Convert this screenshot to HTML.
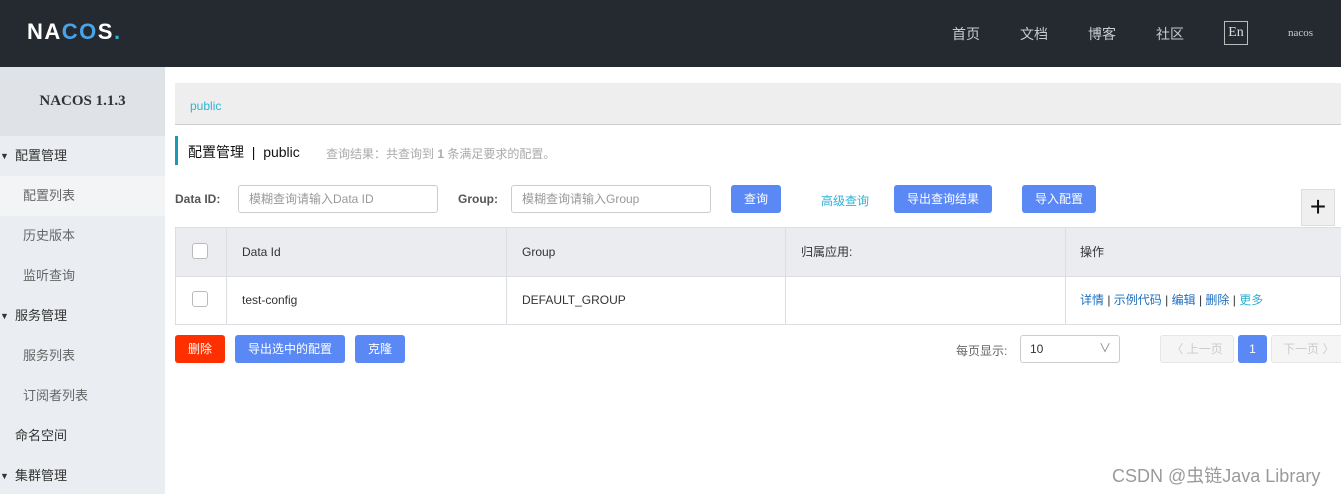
<!DOCTYPE html>
<html><head><meta charset="utf-8"><style>
*{margin:0;padding:0;box-sizing:border-box}
body{width:1341px;height:494px;overflow:hidden;background:#fff;font-family:"Liberation Sans","Noto Sans CJK SC",sans-serif;position:relative;color:#333}
.a{position:absolute;white-space:nowrap}
.hd{left:0;top:0;width:1341px;height:67px;background:#252a31}
.nav{color:#c9cbce;font-size:14px;top:24px}
.sb{left:0;top:67px;width:165px;height:427px;background:#eaedf1}
.m{left:0;width:165px;height:40px;line-height:40px;font-size:13px}
.btn{background:#5a88f5;color:#fff;font-size:12px;text-align:center;border-radius:3px;height:28px;line-height:28px}
.inp{border:1px solid #ccc;border-radius:3px;height:28px;line-height:26px;font-size:12px;color:#999;padding-left:10px}
.th{top:227px;height:50px;line-height:50px;font-size:12px;color:#333}
.td{top:277px;height:47px;line-height:46px;font-size:12px;color:#333}
.cb{width:16px;height:16px;border:1px solid #bbb;border-radius:3px;background:#fff}
</style></head><body>
<div class="a hd"></div>
<div class="a" style="left:27px;top:19px;font-size:22px;font-weight:bold;color:#fff;letter-spacing:1.5px">NA<span style="color:#4aa3e8">CO</span>S<span style="color:#2fb3d3">.</span></div>
<div class="a nav" style="left:952px">首页</div>
<div class="a nav" style="left:1020px">文档</div>
<div class="a nav" style="left:1088px">博客</div>
<div class="a nav" style="left:1156px">社区</div>
<div class="a" style="left:1224px;top:21px;width:24px;height:24px;border:1px solid #bbb;color:#ddd;font-family:'Liberation Serif',serif;font-size:14px;text-align:center;line-height:22px">En</div>
<div class="a" style="left:1288px;top:27px;color:#ccc;font-family:'Liberation Serif',serif;font-size:11px">nacos</div>

<div class="a sb"></div>
<div class="a" style="left:0;top:67px;width:165px;height:69px;background:#dfe3e7;text-align:center;line-height:69px;font-family:'Liberation Serif',serif;font-weight:bold;font-size:15px;color:#333">NACOS 1.1.3</div>
<div class="a" style="left:0;top:176px;width:165px;height:40px;background:#f3f4f6"></div>
<div class="a m" style="top:136px;padding-left:15px;color:#333"><span style="position:absolute;left:0;font-size:9px">▼</span>配置管理</div>
<div class="a m" style="top:176px;padding-left:23px;color:#666">配置列表</div>
<div class="a m" style="top:216px;padding-left:23px;color:#666">历史版本</div>
<div class="a m" style="top:256px;padding-left:23px;color:#666">监听查询</div>
<div class="a m" style="top:296px;padding-left:15px;color:#333"><span style="position:absolute;left:0;font-size:9px">▼</span>服务管理</div>
<div class="a m" style="top:336px;padding-left:23px;color:#666">服务列表</div>
<div class="a m" style="top:376px;padding-left:23px;color:#666">订阅者列表</div>
<div class="a m" style="top:416px;padding-left:15px;color:#333">命名空间</div>
<div class="a m" style="top:456px;padding-left:15px;color:#333"><span style="position:absolute;left:0;font-size:9px">▼</span>集群管理</div>

<div class="a" style="left:175px;top:83px;width:1166px;height:42px;background:#eeeeee;border-bottom:1px solid #ccc"></div>
<div class="a" style="left:190px;top:99px;font-size:12px;color:#2fb3d3">public</div>
<div class="a" style="left:175px;top:136px;width:3px;height:29px;background:#1b9ab8"></div>
<div class="a" style="left:188px;top:142px;font-size:14px;color:#111">配置管理 &nbsp;|&nbsp; public</div>
<div class="a" style="left:326px;top:145px;font-size:12px;color:#aaa">查询结果：共查询到 <b>1</b> 条满足要求的配置。</div>

<div class="a" style="left:175px;top:192px;font-size:12px;font-weight:bold;color:#555">Data ID:</div>
<div class="a inp" style="left:238px;top:185px;width:200px">模糊查询请输入Data ID</div>
<div class="a" style="left:458px;top:192px;font-size:12px;font-weight:bold;color:#555">Group:</div>
<div class="a inp" style="left:511px;top:185px;width:200px">模糊查询请输入Group</div>
<div class="a btn" style="left:731px;top:185px;width:50px">查询</div>
<div class="a" style="left:821px;top:192px;font-size:12px;color:#2fb3d3">高级查询</div>
<div class="a btn" style="left:894px;top:185px;width:98px">导出查询结果</div>
<div class="a btn" style="left:1022px;top:185px;width:74px">导入配置</div>
<div class="a" style="left:1301px;top:189px;width:34px;height:37px;background:#efefef;border:1px solid #ddd;text-align:center;line-height:34px;font-size:28px;color:#111">+</div>

<div class="a" style="left:175px;top:227px;width:1166px;height:98px;border:1px solid #dcdee3"></div>
<div class="a" style="left:176px;top:228px;width:1165px;height:49px;background:#ebecf0;border-bottom:1px solid #dcdee3"></div>
<div class="a" style="left:226px;top:228px;width:1px;height:96px;background:#dcdee3"></div>
<div class="a" style="left:506px;top:228px;width:1px;height:96px;background:#dcdee3"></div>
<div class="a" style="left:785px;top:228px;width:1px;height:96px;background:#dcdee3"></div>
<div class="a" style="left:1065px;top:228px;width:1px;height:96px;background:#dcdee3"></div>
<div class="a cb" style="left:192px;top:243px"></div>
<div class="a cb" style="left:192px;top:291px"></div>
<div class="a th" style="left:242px">Data Id</div>
<div class="a th" style="left:522px">Group</div>
<div class="a th" style="left:801px">归属应用:</div>
<div class="a th" style="left:1080px">操作</div>
<div class="a td" style="left:242px">test-config</div>
<div class="a td" style="left:522px">DEFAULT_GROUP</div>
<div class="a td" style="left:1080px;color:#1e6fbf">详情 <span style="color:#333">|</span> 示例代码 <span style="color:#333">|</span> 编辑 <span style="color:#333">|</span> 删除 <span style="color:#333">|</span> <span style="color:#2fb3d3">更多</span></div>

<div class="a btn" style="left:175px;top:335px;width:50px;background:#ff3000">删除</div>
<div class="a btn" style="left:235px;top:335px;width:110px">导出选中的配置</div>
<div class="a btn" style="left:355px;top:335px;width:50px">克隆</div>

<div class="a" style="left:956px;top:342px;font-size:12px;color:#666">每页显示:</div>
<div class="a" style="left:1020px;top:335px;width:100px;height:28px;border:1px solid #ccc;border-radius:3px;font-size:12px;line-height:26px;padding-left:9px;color:#333">10<span style="position:absolute;right:8px;top:-1px;color:#888;font-size:12px">∨</span></div>
<div class="a" style="left:1160px;top:335px;width:74px;height:28px;border:1px solid #e6e6e6;background:#f5f5f5;border-radius:3px;font-size:12px;line-height:26px;text-align:center;color:#ccc">〈 上一页</div>
<div class="a btn" style="left:1238px;top:335px;width:29px">1</div>
<div class="a" style="left:1271px;top:335px;width:74px;height:28px;border:1px solid #e6e6e6;background:#f5f5f5;border-radius:3px;font-size:12px;line-height:26px;padding-left:11px;color:#ccc">下一页 〉</div>

<div class="a" style="left:1112px;top:462px;font-size:18px;color:#9a9a9a">CSDN @虫链Java Library</div>
</body></html>
